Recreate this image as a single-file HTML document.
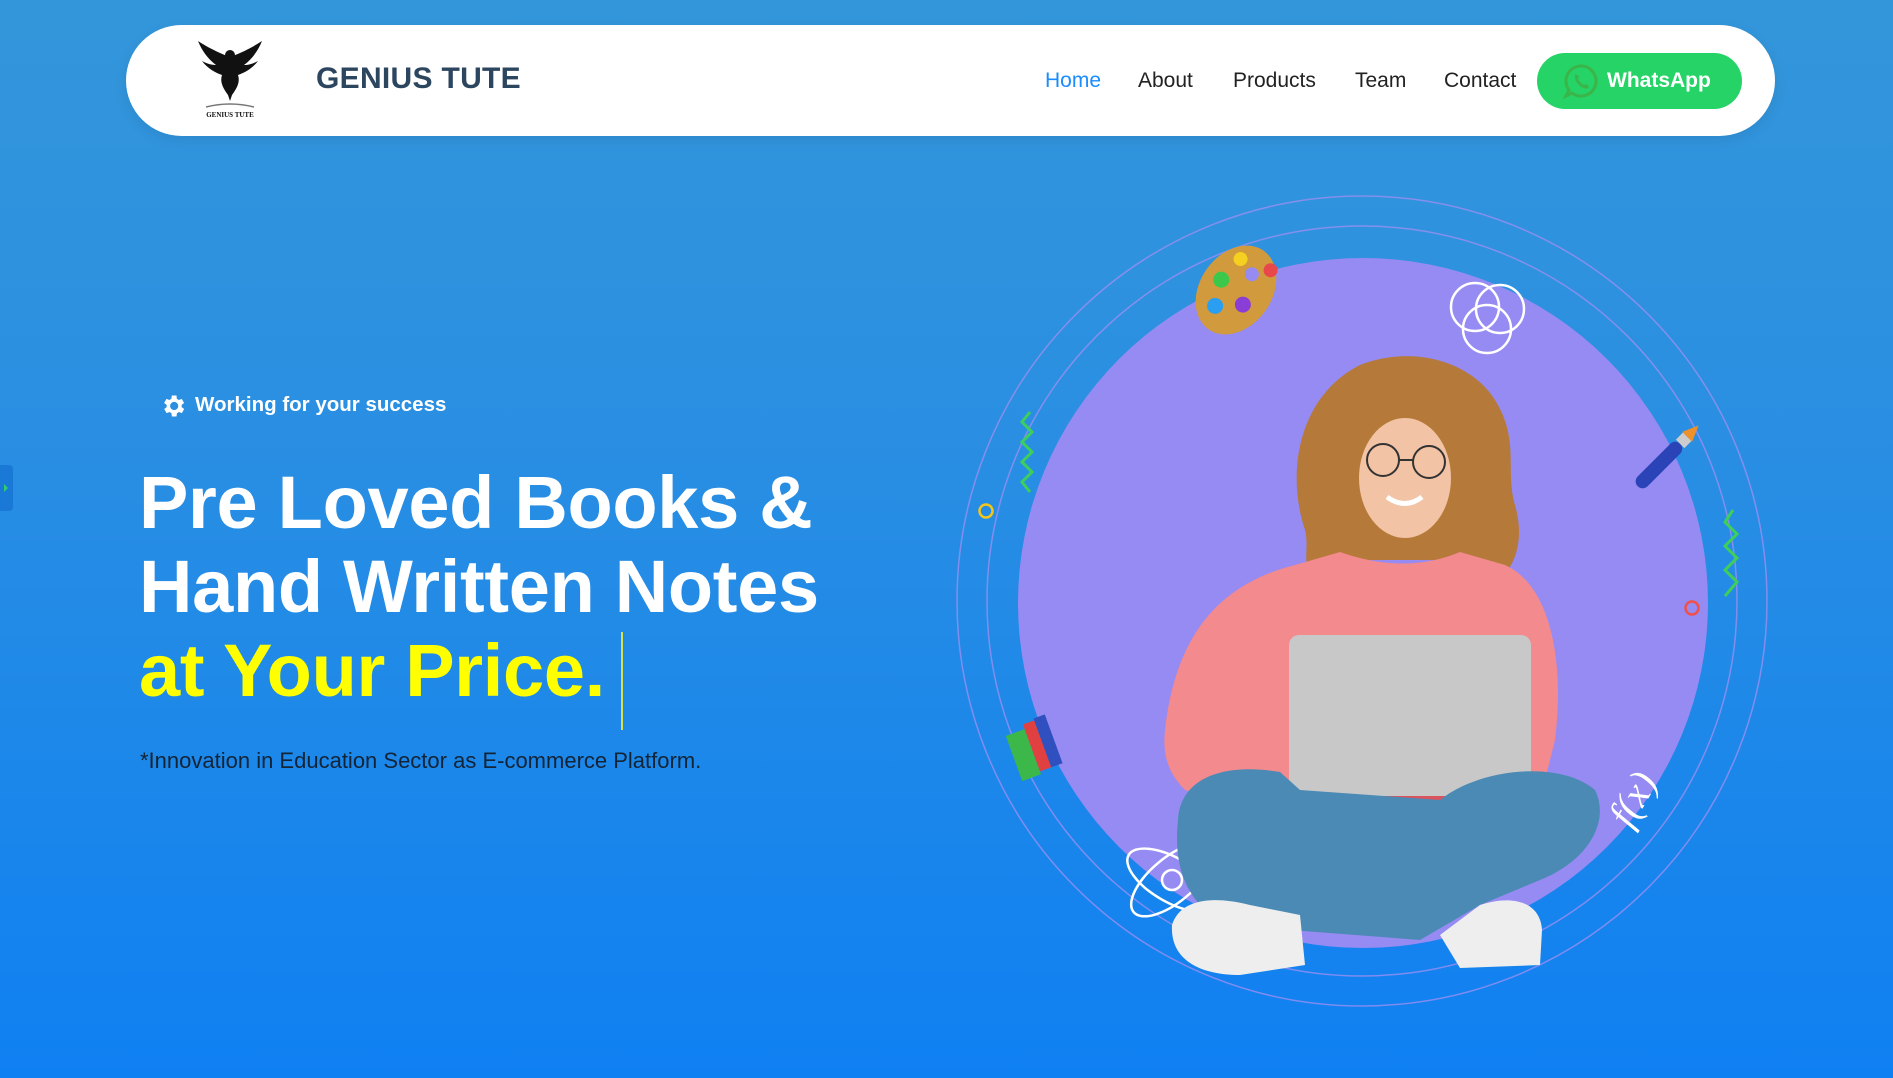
<!DOCTYPE html>
<html><head><meta charset="utf-8"><style>
*{margin:0;padding:0;box-sizing:border-box}
body{width:1893px;height:1078px;overflow:hidden;background:linear-gradient(180deg,#3496da 0%,#2a8fe2 40%,#0f80f2 100%);font-family:"Liberation Sans",sans-serif;position:relative}
.nav{position:absolute;left:126px;top:25px;width:1649px;height:111px;background:#fff;border-radius:56px;box-shadow:0 4px 14px rgba(0,0,0,.08)}
.brand{position:absolute;left:316px;top:62px;font-size:30px;font-weight:bold;color:#2c4660;letter-spacing:.3px}
.link{position:absolute;top:69px;font-size:21px;color:#222}
.wa{position:absolute;left:1537px;top:53px;width:205px;height:56px;background:#25d366;border-radius:28px;color:#fff;font-weight:bold;font-size:21px}
.wa span{position:absolute;left:70px;top:16px}
.badge{position:absolute;left:195px;top:393px;font-size:20.5px;font-weight:bold;color:#fff}
h1{position:absolute;left:139px;top:461px;font-size:74px;line-height:84px;color:#fff;font-weight:bold;letter-spacing:-.3px}
h1 .y{color:#ffff00}
.caret{position:absolute;left:621px;top:632px;width:2px;height:98px;background:#d6e04a}
.sub{position:absolute;left:140px;top:748px;font-size:22px;color:#132436}
.tab{position:absolute;left:0;top:465px;width:13px;height:46px;background:#1a78d6;border-radius:0 4px 4px 0}
</style></head><body>
<div class="tab"><svg width="13" height="46"><path d="M4 19 L8 23 L4 27Z" fill="#2ecc71"/></svg></div>
<div class="nav"></div>
<svg style="position:absolute;left:190px;top:35px" width="80" height="85" viewBox="0 0 80 85">
<path d="M40 22 C34 20 20 14 8 6 C12 16 18 24 26 30 C20 30 16 28 12 26 C18 34 26 38 32 40 C30 46 32 52 38 60 L40 66 L42 60 C48 52 50 46 48 40 C54 38 62 34 68 26 C64 28 60 30 54 30 C62 24 68 16 72 6 C60 14 46 20 40 22Z" fill="#111"/>
<circle cx="40" cy="20" r="5" fill="#111"/>
<path d="M16 72 Q40 66 64 72" stroke="#777" stroke-width="1.5" fill="none"/>
<text x="40" y="82" font-size="7" font-family="Liberation Serif,serif" font-weight="bold" text-anchor="middle" fill="#111">GENIUS TUTE</text>
</svg>
<div class="brand">GENIUS TUTE</div>
<div class="link" style="left:1045px;color:#1a8cff">Home</div>
<div class="link" style="left:1138px">About</div>
<div class="link" style="left:1233px">Products</div>
<div class="link" style="left:1355px">Team</div>
<div class="link" style="left:1444px">Contact</div>
<div class="wa"><svg style="position:absolute;left:25px;top:9px" width="38" height="38" viewBox="0 0 38 38"><path d="M19 4 A15 15 0 1 1 10 31 L4 34 L7 28 A15 15 0 0 1 19 4Z" fill="none" stroke="#3bb54a" stroke-width="3"/><path d="M13 12 Q12 18 17 23 Q22 28 27 26 L25 22 L22 23 Q18 21 16 17 L17 14Z" fill="#3bb54a"/></svg><span>WhatsApp</span></div>

<svg style="position:absolute;left:159px;top:392px" width="28" height="28" viewBox="0 0 24 24"><path fill="#fff" d="M19.4 13a7.5 7.5 0 0 0 0-2l2.1-1.6-2-3.5-2.5 1a7 7 0 0 0-1.7-1L15 3h-4l-.4 2.9a7 7 0 0 0-1.7 1l-2.5-1-2 3.5L6.6 11a7.5 7.5 0 0 0 0 2l-2.1 1.6 2 3.5 2.5-1a7 7 0 0 0 1.7 1L11 21h4l.4-2.9a7 7 0 0 0 1.7-1l2.5 1 2-3.5ZM13 15.5a3.5 3.5 0 1 1 0-7 3.5 3.5 0 0 1 0 7Z"/></svg>
<div class="badge">Working for your success</div>
<h1>Pre Loved Books &amp;<br>Hand Written Notes<br><span class="y">at Your Price.</span></h1>
<div class="caret"></div>
<div class="sub">*Innovation in Education Sector as E-commerce Platform.</div>

<svg style="position:absolute;left:0;top:0" width="1893" height="1078">
<circle cx="1362" cy="601" r="405" fill="none" stroke="#9b8ff0" stroke-width="1.5" opacity=".8"/>
<circle cx="1362" cy="601" r="375" fill="none" stroke="#9b8ff0" stroke-width="1.5" opacity=".8"/>
<circle cx="1363" cy="603" r="345" fill="#968bf2"/>
<circle cx="986" cy="511" r="6.5" fill="none" stroke="#f5c518" stroke-width="2.5"/>
<circle cx="1692" cy="608" r="6.5" fill="none" stroke="#f0504a" stroke-width="2.5"/>
<path d="M1030 412 L1022 422 L1032 432 L1022 442 L1032 452 L1022 462 L1032 472 L1022 482 L1030 492" fill="none" stroke="#3ecf5a" stroke-width="3"/>
<path d="M1733 510 L1725 522 L1737 534 L1725 546 L1737 558 L1725 570 L1737 582 L1725 596" fill="none" stroke="#3ecf5a" stroke-width="3"/>
<g transform="rotate(35 1236 290)"><ellipse cx="1236" cy="290" rx="36" ry="48" fill="#d19a3c"/><circle cx="1240" cy="268" r="7" fill="#968bf2"/><circle cx="1222" cy="262" r="7" fill="#f5d020"/><circle cx="1253" cy="254" r="7" fill="#e8484a"/><circle cx="1218" cy="290" r="8" fill="#3cc84a"/><circle cx="1250" cy="298" r="8" fill="#8a3ed6"/><circle cx="1228" cy="315" r="8" fill="#2a9ef0"/></g>
<g fill="none" stroke="#fff" stroke-width="2.5"><circle cx="1475" cy="307" r="24"/><circle cx="1500" cy="309" r="24"/><circle cx="1487" cy="329" r="24"/></g>
<g transform="rotate(-45 1666 458)"><rect x="1626" y="451" width="60" height="14" rx="7" fill="#2a44b8"/><rect x="1686" y="452" width="10" height="12" fill="#ccc"/><path d="M1696 451 L1712 458 L1696 465Z" fill="#f0902a"/></g>
<g transform="rotate(-20 1040 748)"><rect x="1012" y="725" width="20" height="48" fill="#3cb84a"/><rect x="1032" y="720" width="12" height="50" fill="#e04040"/><rect x="1044" y="718" width="12" height="52" fill="#3050c0"/></g>
<text x="1633" y="812" font-size="40" fill="#fff" font-style="italic" font-family="Liberation Serif,serif" transform="rotate(-60 1633 799)" text-anchor="middle">f(x)</text>
<g fill="none" stroke="#fff" stroke-width="2.5"><ellipse cx="1172" cy="880" rx="50" ry="22" transform="rotate(30 1172 880)"/><ellipse cx="1172" cy="880" rx="50" ry="22" transform="rotate(-40 1172 880)"/><circle cx="1172" cy="880" r="10"/></g>
<path d="M1305 530 C1285 470 1300 395 1360 365 C1410 345 1470 360 1495 400 C1520 440 1505 470 1515 505 C1525 540 1515 565 1500 580 L1460 560 L1350 560 L1315 580 C1300 565 1310 550 1305 530Z" fill="#b57a3a"/>
<ellipse cx="1405" cy="478" rx="46" ry="60" fill="#f2c3a4"/>
<g fill="none" stroke="#333" stroke-width="2"><circle cx="1383" cy="460" r="16"/><circle cx="1429" cy="462" r="16"/><path d="M1399 460 L1413 460"/></g>
<path d="M1387 497 Q1405 510 1422 497" stroke="#fff" stroke-width="5" fill="none"/>
<path d="M1165 730 C1175 640 1215 585 1295 565 L1340 552 Q1405 575 1460 552 L1505 565 C1550 585 1565 660 1555 740 L1540 800 L1280 815 L1185 790 C1165 770 1163 750 1165 730Z" fill="#f28a8e"/>
<path d="M1300 790 L1520 790 L1510 825 L1310 825Z" fill="#d9545e"/>
<rect x="1289" y="635" width="242" height="161" rx="10" fill="#c8c8c8"/>
<path d="M1178 820 C1180 780 1220 762 1280 772 L1300 790 L1440 800 C1480 768 1560 760 1595 790 C1610 820 1590 860 1540 880 L1480 905 L1420 940 L1290 930 L1200 905 C1178 880 1175 850 1178 820Z" fill="#4c8ab6"/>
<path d="M1172 925 C1180 900 1210 895 1250 905 L1300 915 L1305 965 L1240 975 C1200 975 1170 960 1172 925Z" fill="#eeeeee"/>
<path d="M1440 935 L1480 905 C1510 895 1540 900 1542 930 L1540 965 L1460 968 Z" fill="#eeeeee"/>
</svg>
</body></html>
